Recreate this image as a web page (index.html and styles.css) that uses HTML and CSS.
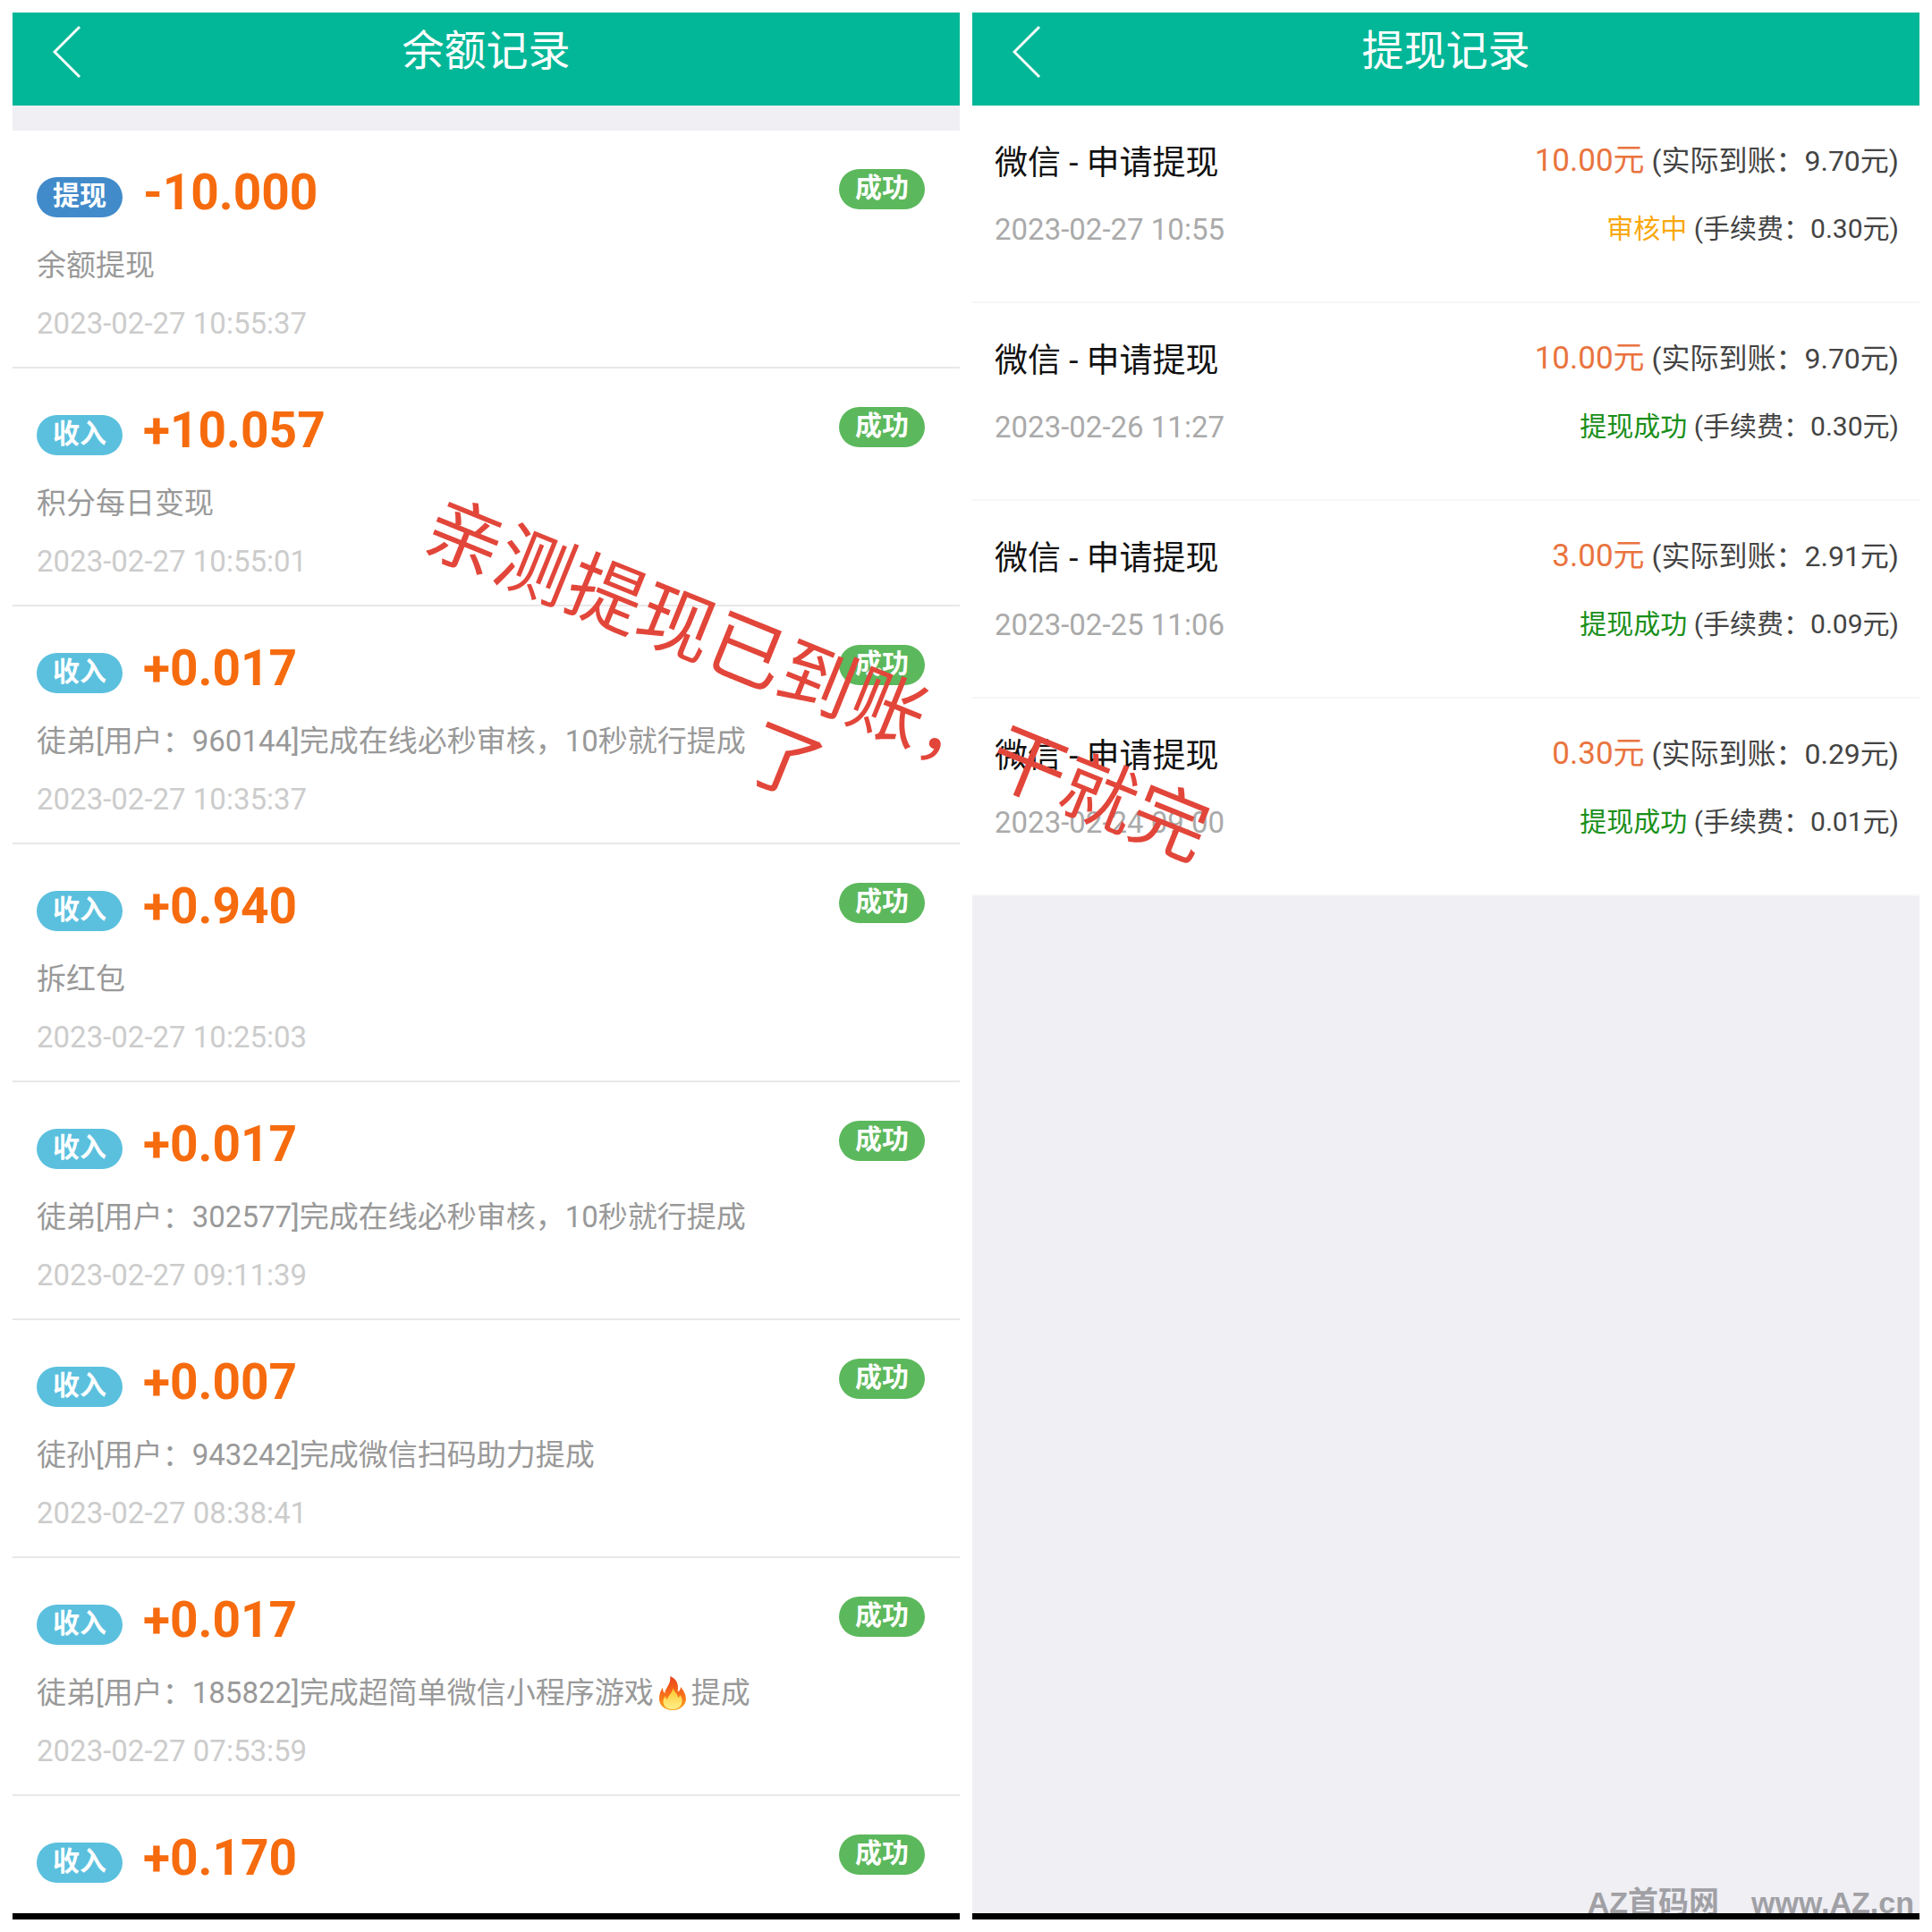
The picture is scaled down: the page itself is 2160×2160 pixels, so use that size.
FILE: index.html
```html
<!DOCTYPE html>
<html lang="zh-CN">
<head>
<meta charset="utf-8">
<meta name="viewport" content="width=device-width, initial-scale=1">
<title>余额记录 / 提现记录</title>
<link rel="stylesheet" href="styles.css">
</head>
<body>
<main class="board">
  <section class="panel">
    <header class="bar">
      <button class="back" type="button" aria-label="返回"><svg class="chevron" viewBox="0 0 32 60" aria-hidden="true"><path d="M30 2 2 30 30 58"/></svg></button>
      <h1 class="title">余额记录</h1>
    </header>
    <ul class="records">
      <li class="record">
        <div class="head"><span class="tag tag-out">提现</span><strong class="amount">-10.000</strong><span class="tag tag-ok">成功</span></div>
        <p class="desc">余额提现</p>
        <time class="time">2023-02-27 10:55:37</time>
      </li>
      <li class="record">
        <div class="head"><span class="tag tag-in">收入</span><strong class="amount">+10.057</strong><span class="tag tag-ok">成功</span></div>
        <p class="desc">积分每日变现</p>
        <time class="time">2023-02-27 10:55:01</time>
      </li>
      <li class="record">
        <div class="head"><span class="tag tag-in">收入</span><strong class="amount">+0.017</strong><span class="tag tag-ok">成功</span></div>
        <p class="desc">徒弟[用户：960144]完成在线必秒审核，10秒就行提成</p>
        <time class="time">2023-02-27 10:35:37</time>
      </li>
      <li class="record">
        <div class="head"><span class="tag tag-in">收入</span><strong class="amount">+0.940</strong><span class="tag tag-ok">成功</span></div>
        <p class="desc">拆红包</p>
        <time class="time">2023-02-27 10:25:03</time>
      </li>
      <li class="record">
        <div class="head"><span class="tag tag-in">收入</span><strong class="amount">+0.017</strong><span class="tag tag-ok">成功</span></div>
        <p class="desc">徒弟[用户：302577]完成在线必秒审核，10秒就行提成</p>
        <time class="time">2023-02-27 09:11:39</time>
      </li>
      <li class="record">
        <div class="head"><span class="tag tag-in">收入</span><strong class="amount">+0.007</strong><span class="tag tag-ok">成功</span></div>
        <p class="desc">徒孙[用户：943242]完成微信扫码助力提成</p>
        <time class="time">2023-02-27 08:38:41</time>
      </li>
      <li class="record">
        <div class="head"><span class="tag tag-in">收入</span><strong class="amount">+0.017</strong><span class="tag tag-ok">成功</span></div>
        <p class="desc">徒弟[用户：185822]完成超简单微信小程序游戏<svg class="fire" viewBox="0 0 30 38" aria-hidden="true"><defs><linearGradient id="flame" x1="0" y1="0" x2="0" y2="1"><stop offset="0" stop-color="#e8431f"/><stop offset=".55" stop-color="#f8701a"/><stop offset="1" stop-color="#fba51d"/></linearGradient><linearGradient id="core" x1="0" y1="0" x2="0" y2="1"><stop offset="0" stop-color="#fdc52c"/><stop offset="1" stop-color="#fff08a"/></linearGradient></defs><path fill="url(#flame)" d="M12 0c6 2 9 7 9 13 0 2-.4 3-.2 4 1.800 0 3-2 3.200-5 4 5 6 9 5.900 14C29.500 33 23 38 15 38 6.500 38 0 33 0 25.500 0 20 2 15 4 13c0 3 .7 5 2.200 6C7 13 14 8 12 0z"/><path fill="url(#core)" d="M15.500 13c.5 4 5 6 5.500 11 1-.5 2-1.500 2.300-3 2 3 2.700 5 2.200 8-.8 5-5 8-10.500 8S5 34 4.500 29.500C4.200 26 5.500 24 7 22c.2 2 .8 3 2 4 1-5 6-7 6.500-13z"/></svg>提成</p>
        <time class="time">2023-02-27 07:53:59</time>
      </li>
      <li class="record">
        <div class="head"><span class="tag tag-in">收入</span><strong class="amount">+0.170</strong><span class="tag tag-ok">成功</span></div>
      </li>
    </ul>
  </section>

  <section class="panel">
    <header class="bar">
      <button class="back" type="button" aria-label="返回"><svg class="chevron" viewBox="0 0 32 60" aria-hidden="true"><path d="M30 2 2 30 30 58"/></svg></button>
      <h1 class="title">提现记录</h1>
    </header>
    <ul class="payouts">
      <li class="payout">
        <div class="line"><span class="name">微信 - 申请提现</span><span class="sum"><span class="price">10.00元</span> (实际到账：9.70元)</span></div>
        <div class="line"><time class="date">2023-02-27 10:55</time><span class="fee"><span class="pending">审核中</span> (手续费：0.30元)</span></div>
      </li>
      <li class="payout">
        <div class="line"><span class="name">微信 - 申请提现</span><span class="sum"><span class="price">10.00元</span> (实际到账：9.70元)</span></div>
        <div class="line"><time class="date">2023-02-26 11:27</time><span class="fee"><span class="done">提现成功</span> (手续费：0.30元)</span></div>
      </li>
      <li class="payout">
        <div class="line"><span class="name">微信 - 申请提现</span><span class="sum"><span class="price">3.00元</span> (实际到账：2.91元)</span></div>
        <div class="line"><time class="date">2023-02-25 11:06</time><span class="fee"><span class="done">提现成功</span> (手续费：0.09元)</span></div>
      </li>
      <li class="payout">
        <div class="line"><span class="name">微信 - 申请提现</span><span class="sum"><span class="price">0.30元</span> (实际到账：0.29元)</span></div>
        <div class="line"><time class="date">2023-02-24 09:00</time><span class="fee"><span class="done">提现成功</span> (手续费：0.01元)</span></div>
      </li>
    </ul>
    <p class="watermark"><span>AZ首码网</span><span>www.AZ.cn</span></p>
  </section>

  <p class="stamp">亲测提现已到账，干就完<br>了</p>
</main>
</body>
</html>
```

FILE: styles.css
```css
* {
  box-sizing: border-box;
}

body {
  margin: 0;
  background: #fff;
  font-family: Roboto, "Noto Sans CJK SC", sans-serif;
}

h1,
p,
ul {
  margin: 0;
  padding: 0;
  font-weight: 400;
  list-style: none;
}

.board {
  position: relative;
  display: grid;
  grid-template-columns: 1fr 1fr;
  gap: 14px;
  min-height: 100vh;
  padding: 14px;
  overflow: hidden;
}

.panel {
  position: relative;
  overflow: hidden;
  background: #efeff4;
  border-bottom: 7px solid #000;
}

/* Title bar */
.bar {
  display: grid;
  grid-template-columns: 120px 1fr 120px;
  height: 104px;
  background: #02b797;
  color: #fff;
}

.back {
  align-self: start;
  padding: 14px 0 0 45px;
  border: 0;
  background: none;
  color: inherit;
  text-align: left;
}

.chevron {
  display: block;
  width: 32px;
  height: 60px;
  fill: none;
  stroke: currentColor;
  stroke-width: 3;
}

.title {
  font-size: 47px;
  line-height: 86px;
  text-align: center;
}

/* Balance records */
.records {
  height: 100%;
  margin-top: 28px;
  background: #fff;
}

.record {
  padding: 40px 39px 15px 27px;
  border-bottom: 2px solid #e8e8e8;
}

.record:last-child {
  border-bottom: 0;
}

.head {
  display: flex;
  align-items: flex-start;
  margin-bottom: 20px;
}

.record:last-child .head {
  margin-bottom: 0;
}

.tag {
  height: 45px;
  padding: 0 18px;
  border-radius: 23px;
  color: #fff;
  font-size: 30px;
  font-weight: 700;
  line-height: 42px;
}

.tag-in,
.tag-out {
  margin-top: 12px;
}

.tag-out {
  background: #428bca;
}

.tag-in {
  background: #5bc0de;
}

.tag-ok {
  margin: 3px 0 0 auto;
  background: #5cb85c;
}

.amount {
  margin-left: 23px;
  color: #f66b0e;
  font-size: 55px;
  font-weight: 700;
  line-height: 58px;
}

.desc {
  color: #999;
  font-size: 33px;
  line-height: 65px;
}

.fire {
  width: 30px;
  height: 38px;
  margin: 0 6px;
  vertical-align: -8px;
}

.time {
  display: block;
  color: #ccc;
  font-size: 33px;
  line-height: 66px;
}

/* Withdrawals */
.payout {
  padding: 24px 23px 41px 25px;
  background: #fff;
  border-bottom: 2px solid #f6f6f6;
}

.line {
  display: flex;
  justify-content: space-between;
}

.line + .line {
  margin-top: -6px;
}

.name {
  color: #111;
  font-size: 37px;
  line-height: 82px;
}

.date {
  color: #aaa;
  font-size: 33px;
  line-height: 78px;
}

.sum,
.fee {
  color: #444;
  font-size: 32px;
  line-height: 76px;
}

.fee {
  font-size: 30px;
}

.price {
  color: #e9743f;
  font-size: 35px;
}

.pending {
  color: #f9a80d;
}

.done {
  color: #1a8f1a;
}

/* Overlays */
.watermark {
  position: absolute;
  right: 6px;
  bottom: -8px;
  display: flex;
  gap: 36px;
  color: #a0a0a5;
  font-family: "Liberation Sans", "Noto Sans CJK SC", sans-serif;
  font-size: 34px;
  font-weight: 700;
  line-height: 40px;
}

.stamp {
  position: absolute;
  top: 807px;
  left: 895px;
  color: #e2463a;
  font-size: 85px;
  line-height: 98px;
  text-align: center;
  white-space: nowrap;
  transform: translate(-50%, -50%) rotate(22deg);
}
```
